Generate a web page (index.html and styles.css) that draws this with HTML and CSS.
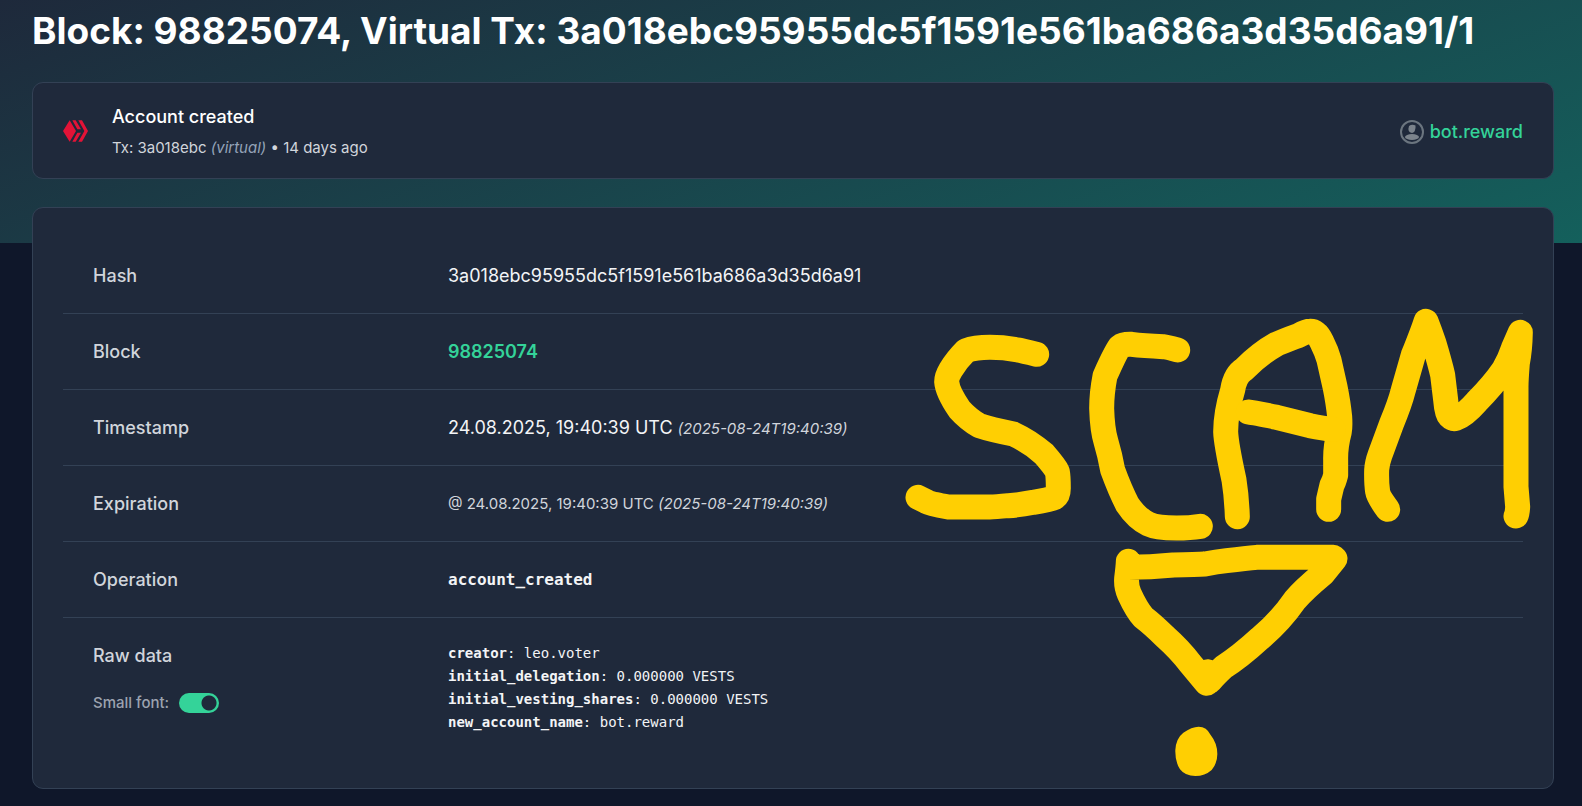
FILE: index.html
```html
<!DOCTYPE html>
<html lang="en">
<head>
<meta charset="utf-8">
<title>Block: 98825074, Virtual Tx</title>
<meta name="viewport" content="width=device-width, initial-scale=1">
<link rel="stylesheet" href="styles.css">
</head>
<body>
<main class="page">
  <h1 class="title">Block: 98825074, Virtual Tx: 3a018ebc95955dc5f1591e561ba686a3d35d6a91/1</h1>

  <section class="card summary">
    <svg class="summary-logo" viewBox="0 0 75 64" aria-hidden="true">
      <path d="M20 0 39 32 20 64 0 32Z M28 0H38L54 27H43Z M46 0H57L75 32 57 64H46L64 32Z M43 37H54L38 64H28Z"/>
    </svg>
    <div class="summary-text">
      <h2 class="summary-title">Account created</h2>
      <p class="summary-meta">Tx: 3a018ebc <em class="muted">(virtual)</em> • 14 days ago</p>
    </div>
    <a class="account" href="#account">
      <svg class="avatar" viewBox="0 0 24 24" aria-hidden="true">
        <circle class="avatar-ring" cx="12" cy="12" r="11"/>
        <path d="M9 6Q12 4 15.500 5.500Q16 12 12 13Q7 12 9 6Z"/>
        <ellipse cx="12" cy="17" rx="7" ry="3"/>
      </svg>
      <span>bot.reward</span>
    </a>
  </section>

  <section class="card details">
    <table class="facts">
      <tbody>
        <tr><th scope="row">Hash</th><td>3a018ebc95955dc5f1591e561ba686a3d35d6a91</td></tr>
        <tr><th scope="row">Block</th><td><a class="block-link" href="#block">98825074</a></td></tr>
        <tr><th scope="row">Timestamp</th><td>24.08.2025, 19:40:39 UTC <em class="iso">(2025-08-24T19:40:39)</em></td></tr>
        <tr><th scope="row">Expiration</th><td class="soft">@ 24.08.2025, 19:40:39 UTC <em>(2025-08-24T19:40:39)</em></td></tr>
        <tr><th scope="row">Operation</th><td class="operation">account_created</td></tr>
        <tr>
          <th scope="row">Raw data
            <label class="switch">Small font: <input class="switch-input" type="checkbox" checked></label>
          </th>
          <td class="raw">
            <div><b>creator</b>: leo.voter</div>
            <div><b>initial_delegation</b>: 0.000000 VESTS</div>
            <div><b>initial_vesting_shares</b>: 0.000000 VESTS</div>
            <div><b>new_account_name</b>: bot.reward</div>
          </td>
        </tr>
      </tbody>
    </table>
    <svg class="scrawl" viewBox="893 208 660 581" role="img" aria-label="Handwritten annotation: SCAM!">
      <g transform="translate(890 300) scale(.33333)">
        <path d="M440 163Q395 152 385 150Q340 142 300 142Q255 142 228 152Q200 180 182 210Q170 230 170 245Q172 275 208 328Q235 358 268 377Q300 388 370 402Q420 425 462 462Q495 500 502 515Q505 530 505 565Q505 585 495 592Q480 599 430 607Q390 615 355 617Q315 621 300 621L175 621Q120 611 110 605L84 592"/>
        <path d="M863 150Q830 141 820 140Q760 137 725 133Q700 132 690 140Q680 150 645 228Q635 280 635 325Q637 390 648 425Q660 465 668 510Q690 570 712 613Q740 655 775 672Q800 684 860 684Q900 684 931 679"/>
      </g>
      <g transform="translate(1210 300) scale(.33333)">
        <path d="M82 650Q80 590 72 540Q48 430 47 395Q47 340 68 270Q75 225 102 208Q150 160 200 132Q250 112 265 107Q290 93 300 94Q320 93 335 125Q350 155 357 180L375 260Q385 310 389 350Q391 380 388 395Q376 440 377 480L377 525Q372 545 366 555Q360 580 356 598L356 628"/>
        <path d="M115 336Q130 337 200 352L300 377Q340 385 370 388"/>
        <path d="M533 628Q505 590 503 575Q499 550 500 510Q501 490 510 465L545 370Q570 310 580 270Q600 200 610 165Q640 90 648 64Q660 95 672 130Q690 190 698 225L707 300Q710 340 718 348Q728 358 738 355Q765 345 800 305Q850 255 882 208Q900 175 910 145L931 97Q930 150 922 190Q918 240 918 260L918 560L923 620Q922 640 918 648"/>
      </g>
      <g transform="translate(1090 530) scale(.33333)">
        <path d="M115 94Q115 105 110 145Q108 170 118 192Q140 240 160 262Q190 285 225 320Q270 360 300 400L350 460L353 425L360 453Q375 435 400 412Q450 380 510 325Q570 275 615 210Q640 180 700 130L735 86L730 82L500 82Q470 85 410 92Q380 95 345 102Q320 104 250 105Q180 112 115 112"/>
        <path class="scrawl-dot" d="M326 590Q350 590 362 615Q382 640 382 672Q382 700 365 720Q345 738 316 738Q285 738 270 718Q255 695 256 660Q258 625 280 608Q305 590 326 590Z"/>
      </g>
    </svg>
  </section>
</main>
</body>
</html>
```
FILE: styles.css
```css
* { box-sizing: border-box; }

body {
  margin: 0;
  min-height: 100vh;
  color: #fff;
  background: linear-gradient(160deg, #1e293b, #14605c) 0 0 / 100% 243px no-repeat #0f172a;
  font: 18px/27px Inter, "Liberation Sans", sans-serif;
}

.page { padding: 8px 28px 17px 32px; }

.title {
  margin: 0 0 28px;
  font-size: 37px;
  line-height: 46px;
  font-weight: 700;
}

.card {
  border: 1px solid #334155;
  border-radius: 11px;
  background: #1f293b;
}

.summary {
  display: flex;
  align-items: center;
  gap: 24px;
  min-height: 97px;
  margin-bottom: 28px;
  padding: 18px 30px;
}

.summary-logo { width: 25px; height: 22px; fill: #e31337; }
.summary-text { flex: 1; padding-top: 2px; }
.summary-title { margin: 0 0 6px; font-size: 18px; line-height: 27px; font-weight: 500; }
.summary-meta { margin: 0; color: #d1d5db; font-size: 15px; line-height: 24px; }
.muted { color: #94a3b8; }

a { color: #34d399; text-decoration: none; }
.account { display: flex; align-items: center; gap: 6px; padding-top: 2px; font-weight: 500; }
.avatar { width: 24px; height: 24px; fill: #7b838c; }
.avatar-ring { fill: none; stroke: #6b757f; stroke-width: 2; }

.details { position: relative; padding: 30px; }

.facts { width: 100%; border-collapse: collapse; }
.facts tr + tr { border-top: 1px solid #334155; }
.facts th, .facts td { padding: 24px 30px; vertical-align: top; text-align: left; }
.facts th { width: 355px; color: #d1d5db; font-weight: 500; }
.facts td { padding-right: 0; color: #f3f4f6; }
.block-link { font-weight: 600; }
.facts .iso, .facts .soft { color: #d1d5db; font-size: 15px; }
.iso { line-height: 18px; }
.facts .operation { font-family: "DejaVu Sans Mono", monospace; font-size: 16px; font-weight: 700; }
.facts .raw { font: 14px/23px "DejaVu Sans Mono", monospace; }

.switch {
  display: flex;
  align-items: center;
  gap: 10px;
  margin-top: 20px;
  color: #9ca3af;
  font-size: 15px;
}

.switch-input {
  appearance: none;
  width: 40px;
  height: 20px;
  margin: 0;
  border-radius: 10px;
  background: radial-gradient(circle at 30px 10px, #1f293b 7px, #34d399 8px);
}

.scrawl {
  position: absolute;
  top: 0;
  right: 0;
  width: 660px;
  height: 581px;
  fill: none;
  stroke: #ffcf02;
  stroke-width: 75;
  stroke-linecap: round;
  stroke-linejoin: round;
  pointer-events: none;
}
.scrawl-dot { fill: #ffcf02; stroke: none; }
```
